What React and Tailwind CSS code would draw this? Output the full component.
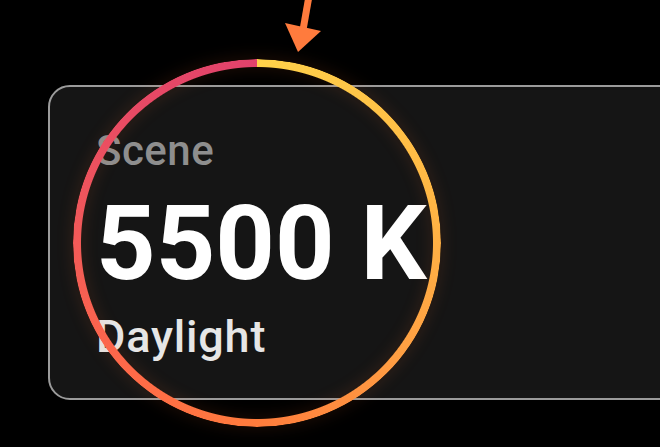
export default function App() {
  return (
    <div className="relative w-[660px] h-[447px] overflow-hidden bg-black font-['Roboto','Liberation_Sans',sans-serif]">
      {/* card */}
      <div className="ml-[48px] mt-[85px] w-[660px] h-[315px] rounded-[22px] border-2 border-[#9b9b9b] bg-[#151515] pl-[46px] pt-[43px] flex flex-col">
        <p className="text-[42px] leading-none font-medium text-[#8e8e8e] tracking-[0.5px]">Scene</p>
        <p className="mt-[20px] text-[104px] leading-none font-bold text-white">5500 K</p>
        <p className="mt-[18px] text-[45px] leading-none font-medium text-[#e6e6e6] tracking-[0.8px]">Daylight</p>
      </div>

      {/* ring */}
      <div className="absolute left-[73px] top-[59px] w-[368px] h-[368px] drop-shadow-[0_0_8px_rgba(255,110,40,0.18)]">
        <div className="w-full h-full rounded-full bg-[conic-gradient(from_0deg,#ffd24a,#ffb845_20%,#ffa043_35%,#ff7c3c_50%,#ff6a48_62%,#f25a58_75%,#e84a64_88%,#e2426c)] [mask:radial-gradient(farthest-side,transparent_calc(100%_-_8.5px),#000_calc(100%_-_7.5px))]" />
      </div>

      {/* arrow */}
      <svg className="absolute left-0 top-0" width="660" height="447" viewBox="0 0 660 447">
        <line x1="309" y1="-4" x2="303" y2="30" stroke="#ff7b3d" strokeWidth="7" />
        <polygon points="285,23 321,31 298,52" fill="#ff7b3d" />
      </svg>
    </div>
  )
}
